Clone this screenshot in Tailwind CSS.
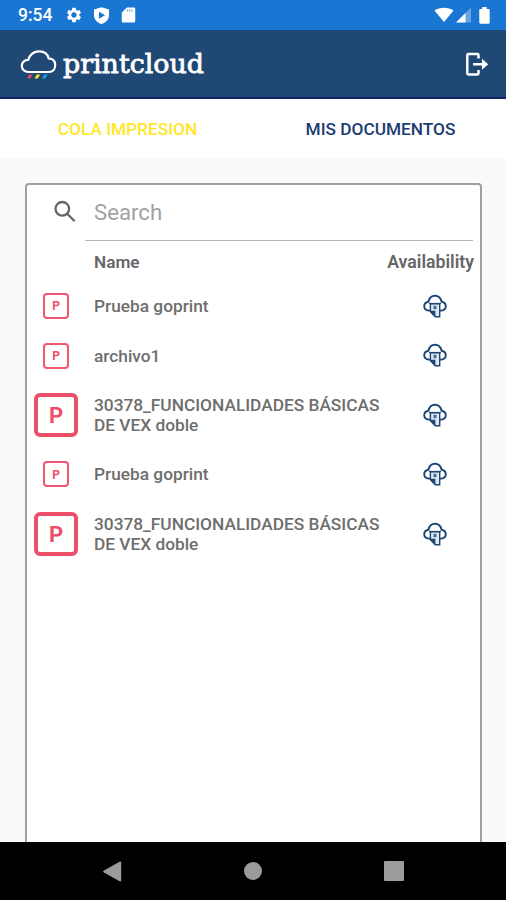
<!DOCTYPE html>
<html lang="es">
<head>
<meta charset="utf-8">
<title>printcloud</title>
<script src="https://cdn.jsdelivr.net/npm/@tailwindcss/browser@4"></script>
</head>
<body class="w-[506px] h-[900px] overflow-hidden bg-[#fafafa] font-['Roboto',sans-serif] flex flex-col">
<svg class="hidden">
  <symbol id="cloud-print" viewBox="0 0 24 24">
    <path d="M7 16.600C3.500 16.900 1.200 15 1.200 12.300c0-2.300 1.700-4 4.200-4.500C6.200 4.200 8.800 1.700 12 1.700s5.800 2.500 6.600 6.100c2.500.5 4.200 2.200 4.200 4.500 0 2.700-2.300 4.600-5.800 4.300" fill="none" stroke="#1d4675" stroke-width="1.900"/>
    <path d="M7.400 9.700h9.300v13h-4.400l-4.900-5z" fill="#dfe8f3" stroke="#1d4675" stroke-width="1.400"/>
    <path d="M6.700 16.800h5.700v6.200z" fill="#1d4675"/>
    <path d="M6 9.500h12" stroke="#1d4675" stroke-width="1.200"/>
    <path d="M10.500 11.800h3v3.400h-3z" fill="#456b96"/>
  </symbol>
</svg>

<div class="h-[30px] shrink-0 bg-[#1976d2] flex items-center text-white pl-[18px] pr-[15px]">
  <span class="text-[17.500px] font-medium leading-none w-[47px] pt-[2px]">9:54</span>
  <svg class="w-[18px] h-[18px]" viewBox="0 0 24 24" fill="currentColor"><path d="M19.140 12.940c.04-.3.060-.61.060-.94 0-.32-.02-.64-.07-.94l2.030-1.580c.18-.14.230-.41.120-.61l-1.920-3.320c-.12-.22-.37-.29-.59-.22l-2.390.96c-.5-.38-1.030-.7-1.620-.94l-.36-2.540c-.04-.24-.24-.41-.48-.41h-3.840c-.24 0-.43.170-.47.410l-.36 2.540c-.59.240-1.130.57-1.620.94l-2.390-.96c-.22-.08-.47 0-.59.220L2.740 8.870c-.12.210-.08.470.12.610l2.030 1.580c-.05.3-.09.630-.09.940s.02.640.07.940l-2.030 1.580c-.18.140-.23.410-.12.610l1.920 3.320c.12.220.37.290.59.220l2.390-.96c.5.380 1.030.7 1.620.94l.36 2.540c.05.240.24.410.48.410h3.840c.24 0 .44-.17.470-.41l.36-2.540c.59-.24 1.130-.56 1.620-.94l2.390.96c.22.080.47 0 .59-.22l1.920-3.320c.12-.22.070-.47-.12-.61l-2.010-1.580zM12 15.600c-1.980 0-3.600-1.620-3.600-3.600s1.620-3.600 3.600-3.600 3.600 1.620 3.600 3.600-1.620 3.600-3.600 3.600z"/></svg>
  <svg class="w-[19px] h-[19px] ml-[9px]" viewBox="0 0 24 24"><path fill="currentColor" d="M12 1.500 2.500 4.500V12c0 5 4 9 9.500 11 5.500-2 9.500-6 9.500-11V4.500z"/><path fill="#1976d2" d="M8.800 7.200v9l7.600-4.500z"/></svg>
  <svg class="w-[19px] h-[18px] ml-[8px]" viewBox="0 0 24 24" preserveAspectRatio="none"><path fill="currentColor" d="M19 2h-9L3.500 8.500V20c0 1.100.5 2 1.500 2H19c1 0 1.500-.9 1.500-2V4c0-1.100-.5-2-1.500-2z"/><path stroke="#5f9fe0" stroke-width="1.400" d="M10.500 4.500v2.800M13.500 4.500v2.800M16.500 4.500v2.800"/></svg>
  <svg class="w-[20px] h-[16px] ml-auto" viewBox="0 0 20 16" fill="currentColor"><path d="M.5 3.400C5.500-.1 14.500-.1 19.500 3.400L10 15z"/></svg>
  <svg class="w-[15px] h-[16px] ml-[2px]" viewBox="0 0 15 16" fill="currentColor"><path opacity=".35" d="M0 15.500 15 .5v15z"/><path d="M0 15.500 9.500 6v9.500z"/></svg>
  <svg class="w-[11px] h-[17px] ml-[8px] mr-[1px]" viewBox="0 0 11 17" fill="currentColor"><path d="M3.200 0h4.600v2H9.500c.8 0 1.200.5 1.200 1.200v12.300c0 .8-.5 1.200-1.200 1.200h-8c-.8 0-1.200-.5-1.200-1.200V3.200C.3 2.500.7 2 1.500 2h1.700z"/></svg>
</div>

<header class="h-[69px] shrink-0 bg-[#1f4874] border-b-2 border-[#112263] flex items-center pl-[20px] pr-[16px]">
  <svg class="w-[38px] h-[32px]" viewBox="0 0 38 32" fill="none">
    <path d="M8.500 24C4.500 24 1.800 21.300 1.800 17.800c0-3.300 2.700-5.900 6.400-5.900C9.800 6.800 13.700 3.300 19.400 3.300c5 0 8.300 3 9.300 7.100 4.400.3 6.500 3.100 6.500 6.600 0 4-2.300 7-6.200 7z" stroke="#fff" stroke-width="2.200"/>
    <path d="M9.200 26.600h3.600l-2.600 4H7z" fill="#e8476a"/>
    <path d="M16.700 26.600h3.600l-2.600 4h-3.200z" fill="#ffe21a"/>
    <path d="M24.200 26.600h3.600l-2.600 4H22z" fill="#1ba0e0"/>
  </svg>
  <svg class="w-[146px] h-[40px] ml-[4px]" viewBox="0 0 146 40"><text x="1" y="28.500" textLength="141" lengthAdjust="spacingAndGlyphs" fill="#fff" stroke="#fff" stroke-width=".8" font-size="26.500" font-family="'DejaVu Serif',serif">printcloud</text></svg>
  <svg class="w-[24px] h-[26px] ml-auto mr-[1px]" viewBox="0 0 24 26" fill="none" stroke="#fff" stroke-width="2.500"><path d="M13.500 7.500V4.200c0-.8-.5-1.200-1.200-1.200H3.500c-.8 0-1.200.5-1.200 1.200v18c0 .8.500 1.200 1.200 1.200h8.800c.8 0 1.200-.5 1.200-1.200V19M8 13.200h13"/><path d="m17 7.700 6.200 5.500-6.200 5.500z" fill="#fff" stroke="none"/></svg>
</header>

<nav class="h-[59px] shrink-0 bg-white flex text-[17.250px] font-medium">
  <div class="flex-1 flex items-center justify-center text-[#ffe62b] pt-[3px] pl-[2px]">COLA IMPRESION</div>
  <div class="flex-1 flex items-center justify-center text-[#1c3d72] pt-[3px] pl-[2px]">MIS DOCUMENTOS</div>
</nav>

<main class="flex-1 min-h-0 pl-[25px] pt-[25px] pr-[24px]">
  <section class="h-[680px] bg-white border-2 border-[#a0a0a0] rounded-[4px] text-[#6e6e6e] text-[17.300px] font-medium">
    <div class="h-[56px] ml-[58px] mr-[7px] border-b border-[#b5b5b5] relative flex items-center pl-[9px]">
      <svg class="absolute left-[-32px] top-[14px] w-[24px] h-[24px]" viewBox="0 0 24 24" fill="none" stroke="#666" stroke-width="2.300"><circle cx="9.300" cy="9.800" r="6.800"/><path d="m14.200 14.700 7.500 7.500"/></svg>
      <span class="text-[22.200px] font-normal text-[#a2a2a2] pt-[1px]">Search</span>
    </div>
    <div class="h-[40px] flex items-center justify-between pl-[67px] pr-[6px] pt-[3px] text-[#666]"><span class="font-semibold text-[17.200px]">Name</span><span class="font-semibold text-[17.700px]">Availability</span></div>

    <div class="h-[49.500px] flex items-center"><div class="w-[58px] flex justify-center"><div class="w-[26px] h-[26px] border-2 border-[#ee5871] rounded-[4px] flex items-center justify-center text-[12px] font-bold leading-none text-[#ed5068] pt-px">P</div></div><div class="w-[320px] pl-[9px] leading-[20px]">Prueba goprint</div><svg class="w-[24px] h-[24px] ml-[18px]"><use href="#cloud-print"/></svg></div>
    <div class="h-[49.500px] flex items-center"><div class="w-[58px] flex justify-center pt-px"><div class="w-[26px] h-[26px] border-2 border-[#ee5871] rounded-[4px] flex items-center justify-center text-[12px] font-bold leading-none text-[#ed5068] pt-px">P</div></div><div class="w-[320px] pl-[9px] pt-px leading-[20px]">archivo1</div><svg class="w-[24px] h-[24px] ml-[18px]"><use href="#cloud-print"/></svg></div>
    <div class="h-[69.500px] flex items-center"><div class="w-[58px] flex justify-center"><div class="w-[44px] h-[44px] border-4 border-[#ec4f68] rounded-[6px] flex items-center justify-center text-[22px] font-bold leading-none text-[#ed5068] pt-[2px]">P</div></div><div class="w-[320px] pl-[9px] leading-[20px]">30378_FUNCIONALIDADES BÁSICAS<br>DE VEX doble</div><svg class="w-[24px] h-[24px] ml-[18px]"><use href="#cloud-print"/></svg></div>
    <div class="h-[49.500px] flex items-center"><div class="w-[58px] flex justify-center"><div class="w-[26px] h-[26px] border-2 border-[#ee5871] rounded-[4px] flex items-center justify-center text-[12px] font-bold leading-none text-[#ed5068] pt-px">P</div></div><div class="w-[320px] pl-[9px] leading-[20px]">Prueba goprint</div><svg class="w-[24px] h-[24px] ml-[18px]"><use href="#cloud-print"/></svg></div>
    <div class="h-[69.500px] flex items-center"><div class="w-[58px] flex justify-center"><div class="w-[44px] h-[44px] border-4 border-[#ec4f68] rounded-[6px] flex items-center justify-center text-[22px] font-bold leading-none text-[#ed5068] pt-[2px]">P</div></div><div class="w-[320px] pl-[9px] leading-[20px]">30378_FUNCIONALIDADES BÁSICAS<br>DE VEX doble</div><svg class="w-[24px] h-[24px] ml-[18px]"><use href="#cloud-print"/></svg></div>
  </section>
</main>

<footer class="h-[58px] shrink-0 bg-black flex items-center justify-between pl-[102px] pr-[102px] relative z-10">
  <svg class="w-[20px] h-[21px]" viewBox="0 0 20 21" fill="#9b9b9b"><path d="M1.500 9.800 18 .6c.6-.3 1.200 0 1.200.6v18.600c0 .6-.6.900-1.200.6L1.500 11.200c-.5-.4-.5-1 0-1.400z"/></svg>
  <div class="w-[18px] h-[18px] rounded-full bg-[#9b9b9b]"></div>
  <div class="w-[20px] h-[20px] rounded-[1px] bg-[#9b9b9b]"></div>
</footer>
</body>
</html>
